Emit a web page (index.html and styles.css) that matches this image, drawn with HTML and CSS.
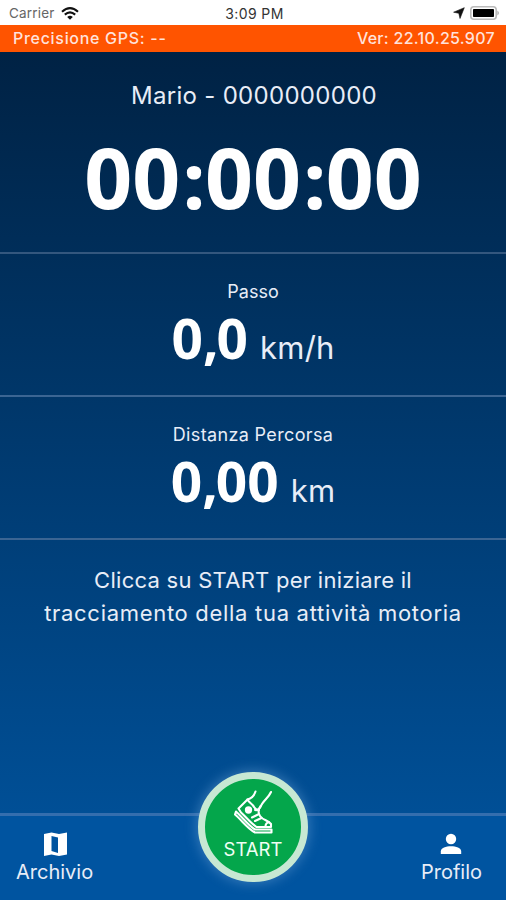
FILE: index.html
```html
<!DOCTYPE html>
<html lang="it">
<head>
    <meta charset="UTF-8">
    <meta name="viewport" content="width=device-width, initial-scale=1.0">
    <title>Attività motoria</title>
    <link rel="stylesheet" href="styles.css">
</head>
<body>
    <div class="app">
        <!-- Barra di stato -->
        <div class="status-bar">
            <div class="status-left">
                <span class="carrier">Carrier</span>
                <svg class="wifi" viewBox="0 0 18 13" width="18" height="13">
                    <path d="M1 4.7Q9-2.3 17 4.7M3.8 7.6Q9 3.1 14.2 7.6" fill="none" stroke="#111" stroke-width="2.1"/>
                    <path d="M6.2 9.9Q9 7.7 11.8 9.9L9 12.8z" fill="#111"/>
                </svg>
            </div>
            <span class="clock">3:09 PM</span>
            <div class="status-right">
                <svg viewBox="0 0 12 12" width="12" height="12"><path d="M11.3.7 7 11.5 5.8 6.3.6 5.2z" fill="#111" stroke="#111" stroke-width=".6"/></svg>
                <svg viewBox="0 0 30 14" width="30" height="14">
                    <rect x=".8" y=".8" width="25.4" height="12.4" rx="3" fill="#fff" stroke="#bbb" stroke-width="1.6"/>
                    <rect x="3" y="3" width="21" height="8" rx=".8" fill="#000"/>
                    <path d="M27.5 4.5q2.5 2.5 0 5z" fill="#999"/>
                </svg>
            </div>
        </div>

        <div class="gps-bar">
            <span class="gps">Precisione GPS: --</span>
            <span class="version">Ver: 22.10.25.907</span>
        </div>

        <main class="content">
            <section class="timer-section">
                <div class="user">Mario - 0000000000</div>
                <div class="timer">00<i>:</i>00<i>:</i>00</div>
            </section>

            <section class="stat">
                <div class="label label-pace">Passo</div>
                <div class="value"><b>0<i>,</i>0</b><span class="unit">km/h</span></div>
            </section>

            <section class="stat">
                <div class="label">Distanza Percorsa</div>
                <div class="value"><b>0<i>,</i>00</b><span class="unit">km</span></div>
            </section>

            <p class="hint"><span class="line-one">Clicca su START per iniziare il</span><br><span class="line-two">tracciamento della tua attività motoria</span></p>
        </main>

        <!-- Menu inferiore -->
        <nav class="bottom-nav">
            <a class="nav-item nav-archive">
                <svg viewBox="0 0 24 24" width="24" height="24">
                    <path fill="#fff" fill-rule="evenodd" d="M1 2 8.5.5 16 2 24 .5V22.5L16 24 8.5 22.5 1 24zM8.5 4V19L15 21V5.5z"/>
                </svg>
                <span>Archivio</span>
            </a>
            <a class="nav-item nav-profile">
                <svg viewBox="0 0 22 22" width="22" height="22">
                    <circle cx="11" cy="6" r="5.2" fill="#fff"/>
                    <path d="M.8 21V18.5C.8 14.8 6 13.3 11 13.3s10.2 1.5 10.2 5.2V21z" fill="#fff"/>
                </svg>
                <span>Profilo</span>
            </a>
            <button class="start-btn">
                <svg viewBox="0 0 40 44" width="40" height="44" fill="none" stroke="#fff" stroke-width="2.1" stroke-linecap="round" stroke-linejoin="round">
                    <path d="M22.5 1.5C21 6 18.5 8.5 14.5 9.5L5.5 18.5 8 22.5C13 27 17.5 33 23.5 37H38V34C35 30 30 30.5 27 26 25 23 25.5 19 27.5 16"/>
                    <path d="M38 2C35.5 8 29.5 11 27.5 17 26 19.5 24.5 20.5 22 20"/>
                    <path d="M14.5 9.5C15.5 12 18 13 20 15.5S22 20 26 20"/>
                    <path d="M3 21.5C10 28 15.5 35.5 22 39.5H38.5V42.5H22C14.5 38.5 9 30.5 2 24.5z"/>
                    <path d="M19 27.5 25 24.5M22 31 28.5 28M32.5 36.5C32.5 33.5 34 32.5 36 32.2"/>
                    <circle cx="15.5" cy="20" r="2.6" fill="#fff"/>
                </svg>
                <span>START</span>
            </button>
        </nav>
    </div>
</body>
</html>
```
FILE: styles.css
```css
* {
    box-sizing: border-box;
}

body {
    margin: 0;
    font-family: Inter, "Liberation Sans", sans-serif;
    color: #e8edf7;
}

.app {
    height: 900px;
    display: flex;
    flex-direction: column;
    overflow: hidden;
}

.status-bar {
    height: 25px;
    padding: 1px 6px 0 9px;
    display: grid;
    grid-template-columns: 1fr auto 1fr;
    align-items: center;
    background: #fff;
    color: #333;
    font-size: 13.5px;
}

.status-left, .status-right {
    display: flex;
    align-items: center;
    gap: 6px;
}

.status-right {
    justify-content: flex-end;
    gap: 5px;
}

.carrier {
    color: #666;
    letter-spacing: 0.2px;
}

.clock {
    font-size: 14px;
    letter-spacing: 0.4px;
}

.gps-bar {
    height: 27px;
    padding: 0 11px 1px 13px;
    display: flex;
    justify-content: space-between;
    align-items: center;
    background: #ff5400;
    color: #ffe2dc;
    font-size: 16px;
    font-weight: 500;
}

.gps {
    letter-spacing: 0.7px;
}

.version {
    letter-spacing: 0.3px;
}

.content {
    flex: 1;
    background: linear-gradient(#002244, #004f96);
}

.timer-section {
    height: 202px;
    padding-top: 28px;
    border-bottom: 2px solid #34577e;
    text-align: center;
}

.user {
    font-size: 24px;
    line-height: 32px;
    letter-spacing: 0.3px;
    padding-left: 2px;
}

.timer {
    margin-top: 15px;
    font-family: "Noto Sans", sans-serif;
    font-size: 84px;
    line-height: 100px;
    font-weight: 700;
    color: #fff;
}

.timer i {
    padding-left: 3px;
    font-size: 76px;
    font-style: normal;
    font-weight: 800;
    line-height: 1;
}

.stat {
    height: 143px;
    padding-top: 27px;
    border-bottom: 2px solid #3b6593;
    text-align: center;
}

.label {
    font-size: 18px;
    line-height: 22px;
    letter-spacing: 0.35px;
}

.label-pace {
    letter-spacing: 0;
}

.value {
    display: flex;
    justify-content: center;
    align-items: baseline;
    gap: 12px;
    line-height: 69px;
}

.value b {
    font-family: "Noto Sans", sans-serif;
    font-size: 55px;
    color: #fff;
}

.value i {
    font-style: normal;
    letter-spacing: -2px;
}

.unit {
    font-size: 31px;
    font-weight: 400;
    letter-spacing: 0.2px;
}

.hint {
    margin: 24px 0 0;
    text-align: center;
    font-size: 22px;
    line-height: 33px;
}

.line-one {
    letter-spacing: 0.27px;
}

.line-two {
    letter-spacing: 0.7px;
}

.bottom-nav {
    position: relative;
    height: 87px;
    padding: 16px 16px 0;
    display: flex;
    justify-content: space-between;
    border-top: 3px solid #346eae;
    background: #0054a0;
}

.nav-item {
    display: flex;
    flex-direction: column;
    align-items: center;
    font-size: 20px;
    line-height: 28px;
}

.nav-item svg {
    height: 24px;
    margin-bottom: 2px;
}

.nav-profile {
    margin-right: 8px;
}

.start-btn {
    position: absolute;
    left: 50%;
    top: -44px;
    width: 110px;
    height: 110px;
    margin-left: -55px;
    padding: 11px 0 0;
    display: flex;
    flex-direction: column;
    align-items: center;
    justify-content: flex-start;
    border: 7px solid #c7e8d3;
    border-radius: 50%;
    background: #04a64b;
    box-shadow: 0 0 12px 2px rgba(110, 165, 215, 0.45);
    color: #f0fff4;
    font-family: inherit;
    font-size: 18.5px;
}

.start-btn svg {
    margin-bottom: 4px;
}
```
